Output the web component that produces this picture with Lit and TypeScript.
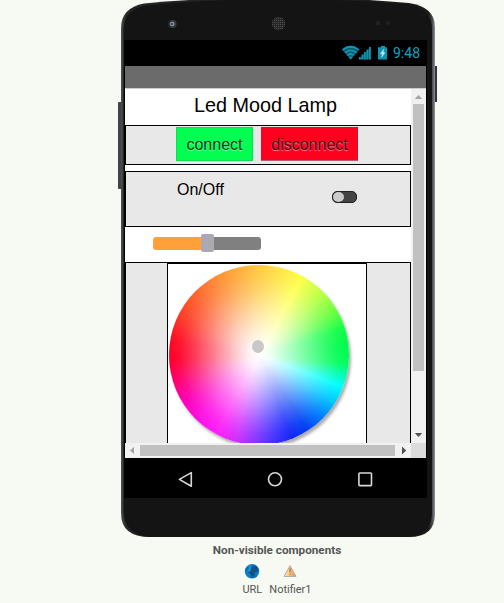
import { LitElement, html, css, svg } from "lit";
import { customElement } from "lit/decorators.js";

@customElement("phone-status-bar")
class PhoneStatusBar extends LitElement {
  static styles = css`
    :host { display: flex; height: 26px; align-items: center; justify-content: flex-end; box-sizing: border-box; padding-right: 6px; color: #0fa3c4; font: 14px/24px Roboto, sans-serif; }
    svg { display: block; }
    .time { width: 28px; margin-left: 6px; padding-bottom: 1px; white-space: nowrap; }
  `;
  render() {
    return html`
      <svg width="45" height="16" viewBox="0 0 45 16">
        <path d="M0 4.4Q8.6 -3 17.2 4.4L8.7 14.6Z" fill="#0b5a6d" />
        <g fill="none" stroke="#0d9ab9" stroke-width="1.8">
          <path d="M0.6 4.9Q8.6 -1.4 16.8 4.9" />
          <path d="M2.9 7.7Q8.7 3 14.5 7.7" />
          <path d="M5.2 10.4Q8.7 7.6 12.2 10.4" />
        </g>
        <path d="M6.8 12.2Q8.7 10.8 10.6 12.2L8.7 14.6Z" fill="#0d9ab9" />
        <path d="M16.6 14.4L29 1.5V14.4Z" fill="#0a5365" />
        ${[0, 1, 2, 3, 4].map((i) => svg`<rect x=${17 + i * 2.5} y=${12 - i * 2.5} width="1.7" height=${2.4 + i * 2.5} fill="#0d94b2" />`)}
        <path d="M39 1h4v1.3h2.4V14.4H36V2.3h3z" fill="#0d94b2" />
        <path d="M41.8 4.2L38.4 8.8h2.2l-1 3.4L43 7.8h-2z" fill="#e5f6f9" stroke="#a8dbe6" stroke-width=".6" />
      </svg>
      <span class="time">9:48</span>
    `;
  }
}

@customElement("scroll-track")
class ScrollTrack extends LitElement {
  static properties = { horizontal: { type: Boolean, reflect: true } };
  static styles = css`
    :host { display: flex; flex-direction: column; width: 15px; background: #f1f1f1; align-items: center; }
    :host([horizontal]) { flex-direction: row; width: auto; height: 15px; }
    .arrow { width: 15px; height: 15px; flex: none; }
    .thumb { background: #c1c1c1; width: 11px; height: 267px; }
    .space { flex: 1; }
    :host([horizontal]) .thumb { width: 255px; height: 11px; }
  `;
  declare horizontal: boolean;
  render() {
    return this.horizontal
      ? html`<svg class="arrow" viewBox="0 0 15 15"><path d="M9 4v7L5 7.5z" fill="#a3a3a3" /></svg>
          <div class="thumb"></div><div class="space"></div>
          <svg class="arrow" viewBox="0 0 15 15"><path d="M6 3.5v8l4.2-4z" fill="#505050" /></svg>`
      : html`<svg class="arrow" viewBox="0 0 15 15"><path d="M3.8 10h7.4L7.5 6z" fill="#a3a3a3" /></svg>
          <div class="thumb"></div><div class="space"></div>
          <svg class="arrow" viewBox="0 0 15 15"><path d="M3.8 5h7.4L7.5 9z" fill="#505050" /></svg>`;
  }
}

@customElement("color-wheel")
class ColorWheel extends LitElement {
  static styles = css`
    :host { display: block; position: relative; width: 180px; height: 180px; border-radius: 50%; box-shadow: 2px 3px 3px rgba(70, 55, 55, 0.42);
      background:
        radial-gradient(circle at 50% 50%, #fff 0, rgba(255, 255, 255, 0.93) 9%, rgba(255, 255, 255, 0.72) 22%, rgba(255, 255, 255, 0.46) 37%, rgba(255, 255, 255, 0.2) 52%, rgba(255, 255, 255, 0.06) 62%, transparent 69%),
        conic-gradient(#ffca44, #ffe84a 16deg, #ffff4a 29deg, #b8ff48 46deg, #66ff40 61deg, #10ff48 73deg, #00fb4c 84deg, #00ff58 95deg, #00ffb0 103deg, #00ffff 111deg, #00c8ff 122deg, #0080ff 134deg, #0040f4 147deg, #1228f8 158deg, #4030ff 169deg, #8035ff 181deg, #d030ff 195deg, #ff20f8 208deg, #ff10e8 222deg, #ff00b8 238deg, #ff0068 254deg, #ff0028 268deg, #ff0c25 280deg, #ff4028 298deg, #ff7a34 322deg, #ffa63c 342deg, #ffca44 360deg); }
    .marker { position: absolute; left: 83px; top: 75px; width: 12px; height: 13px; border-radius: 50%; background: #c8c8c8; }
  `;
  render() {
    return html`<div class="marker"></div>`;
  }
}

@customElement("lamp-screen")
class LampScreen extends LitElement {
  static styles = css`
    :host { display: block; width: 286px; height: 354px; overflow: hidden; background: #fff; color: #000; font-family: "Liberation Sans", sans-serif; }
    .title { height: 36px; font-size: 19.8px; line-height: 33px; text-align: center; padding-right: 5px; }
    .row { display: flex; box-sizing: border-box; border: 1px solid #000; background: #e8e8e8; }
    .buttons { height: 40px; padding: 1px 0 0 50px; gap: 8px; }
    .button { box-sizing: border-box; height: 34px; font-size: 16px; line-height: 33px; text-align: center; color: #06391a; text-shadow: 0 1px 1px rgba(255, 255, 255, 0.5); }
    .connect { width: 77px; background: #00ff50; border: 1px solid #10dc50; }
    .disconnect { width: 97px; background: #ff001f; border: 1px solid #d81028; border-left-color: #ff001f; border-bottom-color: #b06070; color: #450812; }
    .power { height: 56px; margin-top: 6px; padding: 8px 53px 0 51px; justify-content: space-between; font-size: 16px; line-height: 19px; }
    .switch { box-sizing: border-box; width: 25px; height: 12px; margin-top: 11px; border: 1px solid #222; border-radius: 5px; background: #444; }
    .knob { width: 11px; height: 10px; border-radius: 50%; background: #ccc; }
    .slider { display: flex; align-items: center; box-sizing: border-box; height: 35px; padding: 0 0 3px 28px; }
    .filled { width: 48px; height: 13px; border-radius: 3px 0 0 3px; background: #ffa039; }
    .thumb { width: 13px; height: 18px; border-radius: 2px; background: #aaaab0; }
    .rest { width: 47px; height: 13px; border-radius: 0 3px 3px 0; background: #808080; }
    .canvas-row { height: 240px; padding-left: 41px; }
    .canvas { box-sizing: border-box; width: 200px; height: 230px; border: 1px solid #000; background: #fff; padding: 1px 0 0 1px; }
  `;
  render() {
    return html`
      <div class="title">Led Mood Lamp</div>
      <div class="row buttons"><div class="button connect">connect</div><div class="button disconnect">disconnect</div></div>
      <div class="row power"><span>On/Off</span><div class="switch"><div class="knob"></div></div></div>
      <div class="slider"><div class="filled"></div><div class="thumb"></div><div class="rest"></div></div>
      <div class="row canvas-row"><div class="canvas"><color-wheel></color-wheel></div></div>
    `;
  }
}

@customElement("app-root")
class AppRoot extends LitElement {
  static styles = css`
    :host { display: block; width: 504px; height: 603px; overflow: hidden; background: #f7faf3; font-family: Roboto, sans-serif; }
    .phone { position: relative; width: 319px; height: 538px; margin-left: 118px; box-sizing: border-box; padding: 40px 10px 0 6px; }
    .body { position: absolute; inset: 0; }
    .display { position: relative; width: 303px; height: 458px; background: #000; }
    .app { width: 301px; margin-left: 1px; }
    .heading { height: 22px; background: #6b6b6b; border-bottom: 1px solid #ccc; }
    .view { display: grid; grid-template: 354px 15px / 286px 15px; }
    .corner { background: #dcdcdc; }
    .nav { display: block; }
    .footer { width: 318px; margin-left: 118px; text-align: center; color: #555; }
    .caption { font-size: 11.7px; font-weight: 700; line-height: 14px; padding-top: 5px; }
    .components { display: flex; justify-content: center; gap: 7px; margin-top: 6px; font-size: 11px; line-height: 14px; }
    .component { display: flex; flex-direction: column; align-items: center; gap: 4px; }
  `;
  render() {
    return html`
      <div class="phone">
        <svg class="body" width="319" height="538" viewBox="0 0 319 538">
          <defs>
            <linearGradient id="edge">
              <stop offset="0" stop-color="#505254" /><stop offset="0.006" stop-color="#3a3c3e" /><stop offset="0.018" stop-color="#242526" />
              <stop offset="0.98" stop-color="#1b1b1b" /><stop offset="0.991" stop-color="#45474a" /><stop offset="1" stop-color="#909396" />
            </linearGradient>
            <pattern id="mesh" width="2" height="2" patternUnits="userSpaceOnUse"><rect width="2" height="2" fill="#272727" /><rect width="1" height="1" fill="#4b4b4b" /></pattern>
          </defs>
          <rect x="0" y="102" width="4" height="87" rx="1" fill="#414345" />
          <rect x="316" y="66" width="3" height="36" fill="#333537" />
          <path d="M3 28Q3 8 26 3.5Q82 -2 160 -3Q238 -2 291 3Q317 7 317 27V514Q317 537 291 537H32Q3 537 3 513Z" fill="url(#edge)" />
          <path d="M5.5 29Q6 10 28 5.5Q84 -0.5 160 -1Q236 -0.5 289 4.5Q314 9 314 29V512Q314 535 289 537H33Q6 535 5.5 511Z" fill="#141414" />
          <circle cx="54.5" cy="24" r="4" fill="#383b3e" /><circle cx="54.3" cy="24" r="2.2" fill="#8589a5" /><circle cx="54" cy="24" r="1" fill="#33389a" />
          <circle cx="160.5" cy="23.5" r="6.7" fill="url(#mesh)" />
          <circle cx="260" cy="23" r="2.5" fill="#202020" /><circle cx="270" cy="23" r="2" fill="#202020" />
        </svg>
        <div class="display">
          <phone-status-bar></phone-status-bar>
          <div class="app">
            <div class="heading"></div>
            <div class="view">
              <lamp-screen></lamp-screen>
              <scroll-track></scroll-track>
              <scroll-track horizontal></scroll-track>
              <div class="corner"></div>
            </div>
          </div>
          <svg class="nav" width="303" height="40" viewBox="0 0 303 40">
            <g fill="none" stroke="#d8d8d8" stroke-width="1.6" stroke-linejoin="round">
              <path d="M67.3 14.6V28.2L55.4 21.4Z" />
              <circle cx="151" cy="21.3" r="6.5" />
              <rect x="234.9" y="15" width="12.6" height="12.6" rx="0.8" />
            </g>
          </svg>
        </div>
      </div>
      <div class="footer">
        <div class="caption">Non-visible components</div>
        <div class="components">
          <div class="component">
            <svg width="16" height="16" viewBox="0 0 16 16">
              <defs><radialGradient id="sea" cx="0.4" cy="0.35"><stop offset="0" stop-color="#169ee4" /><stop offset="1" stop-color="#087ac0" /></radialGradient></defs>
              <circle cx="8" cy="8.3" r="7.2" fill="url(#sea)" />
              <path d="M8 2.5L12.5 3L14.5 6L13 9L11 9.5L10.5 13L8 14.5L6.5 11.5L4 9.5L6.5 8L7 5Z" fill="#12528c" />
              <path d="M1.5 6L4 3.5L5 5L3 7.5L3.5 11Z" fill="#1767a5" />
            </svg>
            <span>URL</span>
          </div>
          <div class="component">
            <svg width="16" height="16" viewBox="0 0 16 16">
              <defs><linearGradient id="warn"><stop offset="0.2" stop-color="#ffdca8" /><stop offset="1" stop-color="#e8913e" /></linearGradient></defs>
              <path d="M8 2.6L14 13.5H2Z" fill="url(#warn)" stroke="#b5aea5" stroke-width="1" stroke-linejoin="round" />
              <path d="M7.4 5.5h1.3l-.3 4h-.7zM7.5 10.7h1.1v1.1H7.5z" fill="#8b6740" />
            </svg>
            <span>Notifier1</span>
          </div>
        </div>
      </div>
    `;
  }
}
